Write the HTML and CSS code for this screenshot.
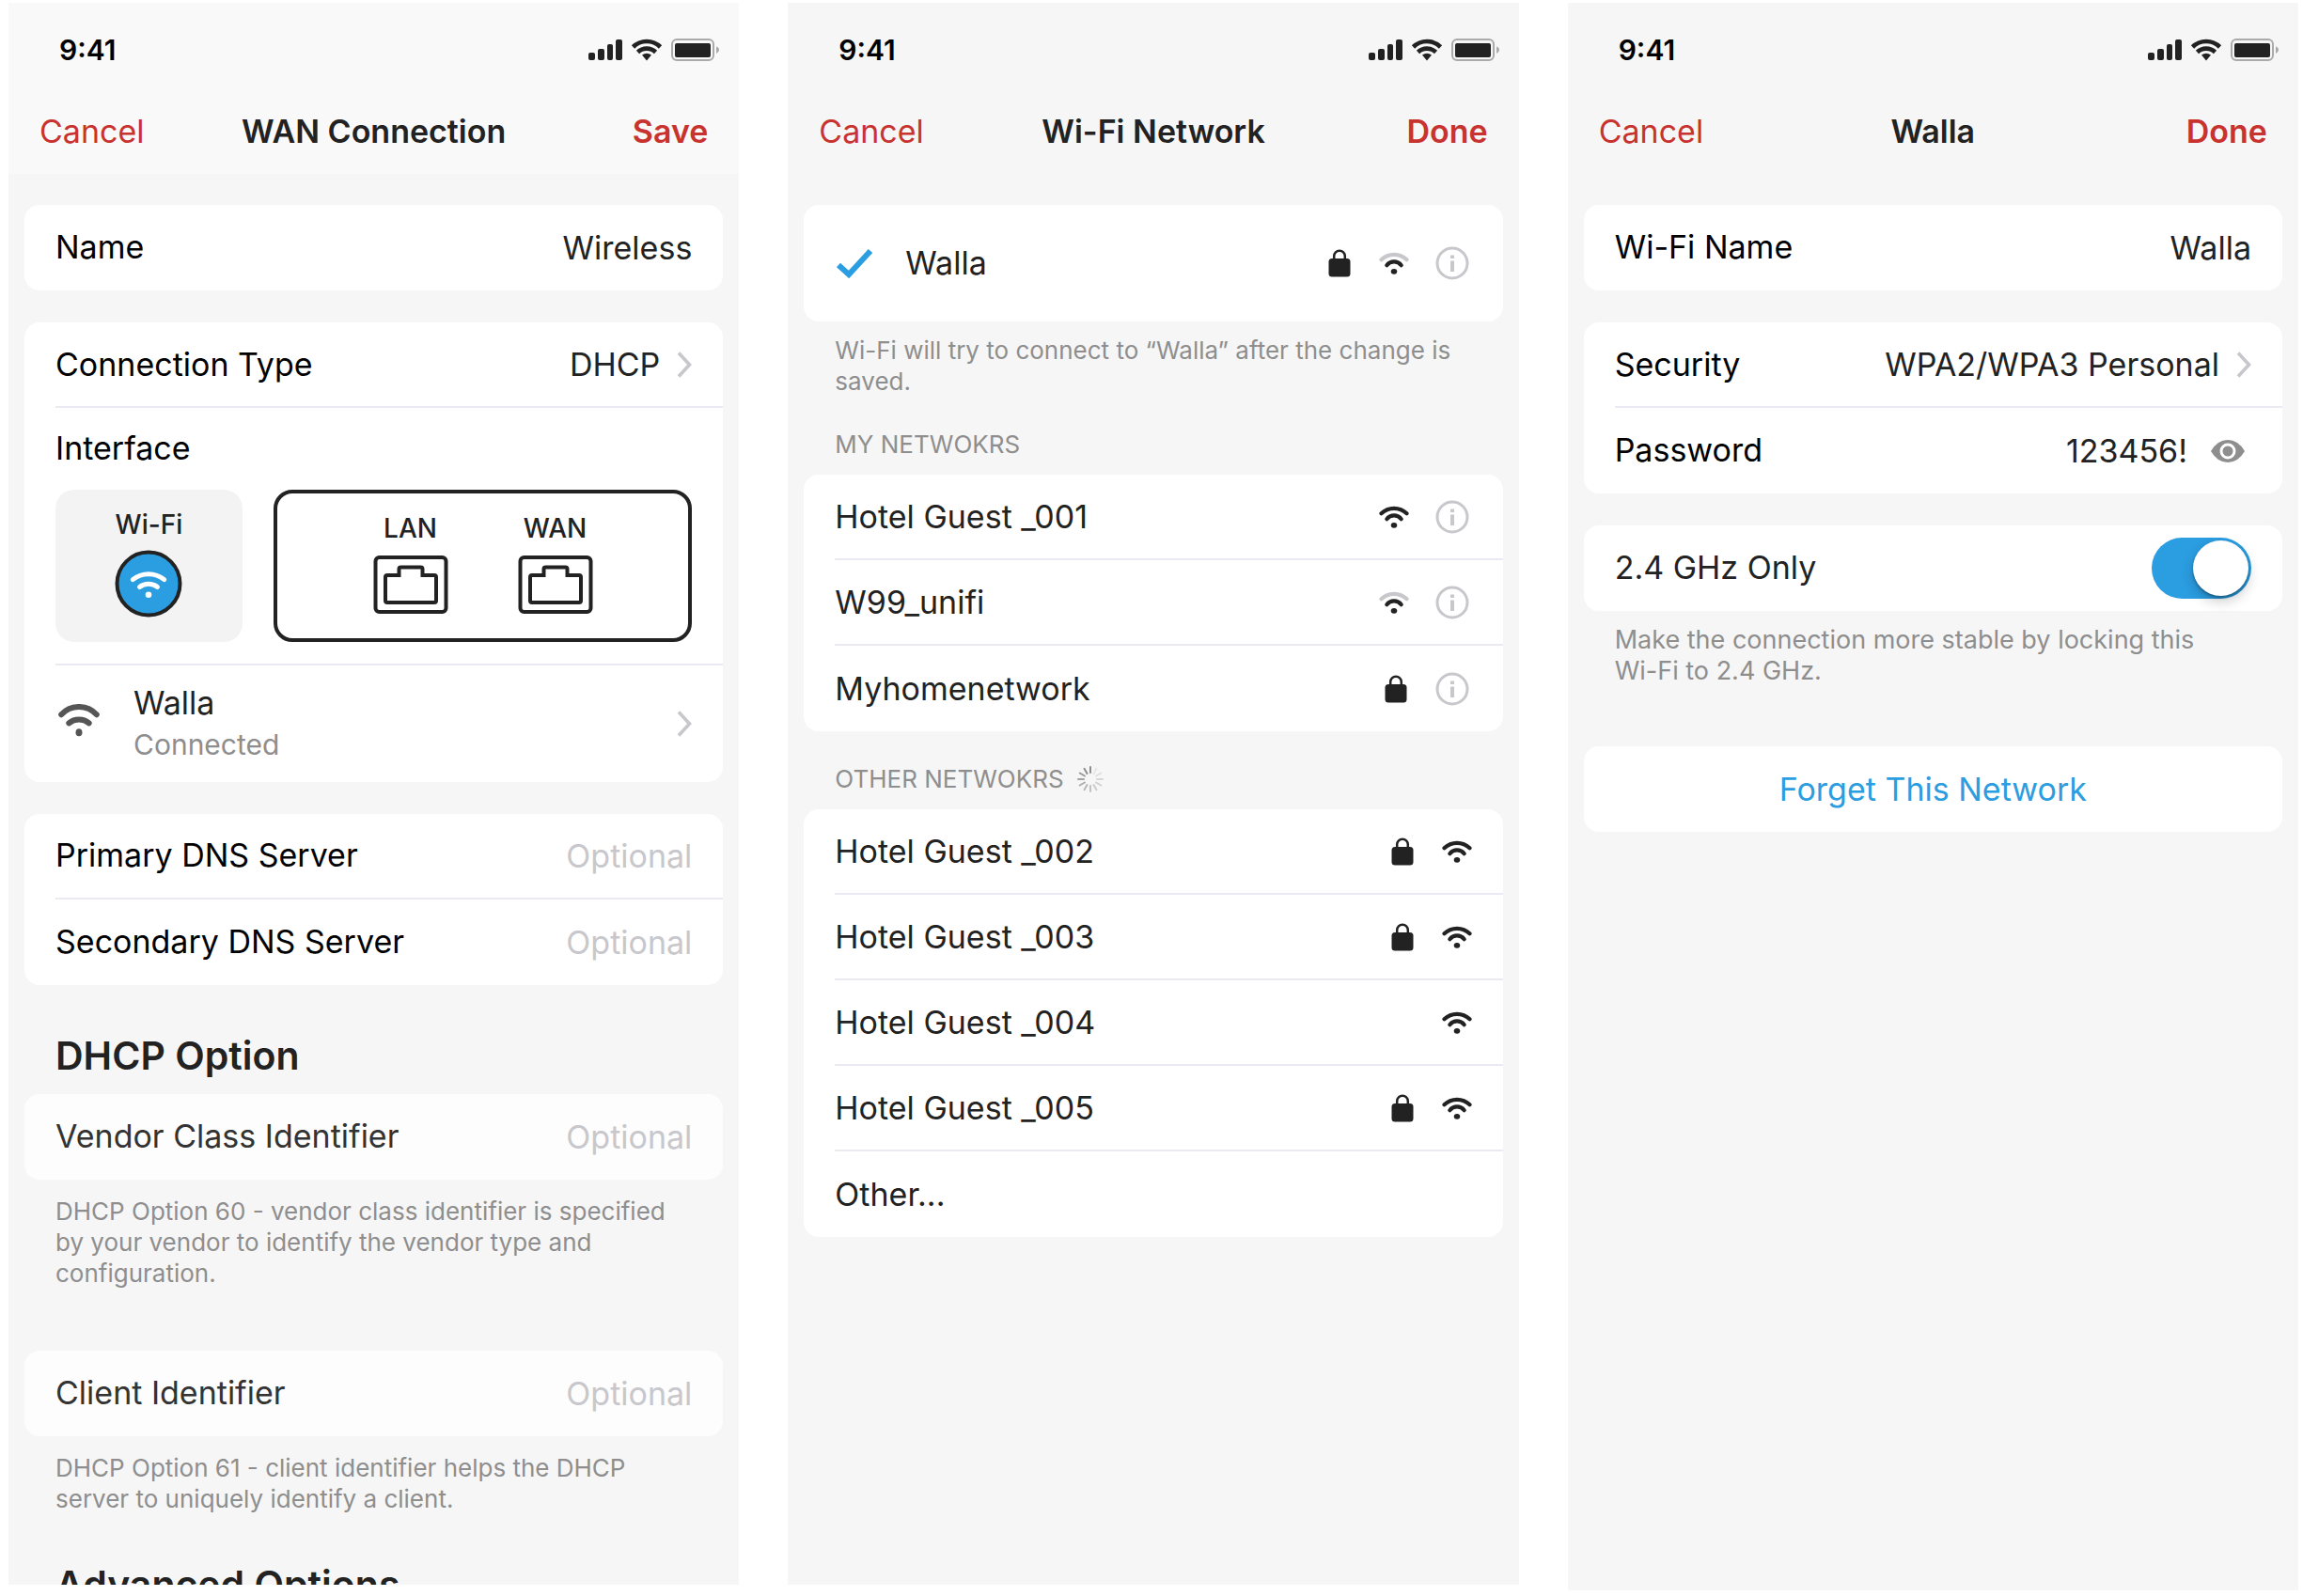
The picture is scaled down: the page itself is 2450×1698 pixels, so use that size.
FILE: index.html
```html
<!DOCTYPE html>
<html lang="en">
<head>
  <meta charset="UTF-8">
  <meta name="viewport" content="width=device-width, initial-scale=1">
  <title>WAN Connection</title>
  <link rel="stylesheet" href="styles.css">
</head>
<body>
  <!-- shared icons -->
  <svg class="sprite" aria-hidden="true">
    <symbol id="status" viewBox="0 0 140 24">
      <g fill="#222">
        <rect x="0" y="15" width="7" height="8" rx="2"/>
        <rect x="10" y="11" width="7" height="12" rx="2"/>
        <rect x="20" y="6" width="6" height="17" rx="2"/>
        <rect x="29" y="1" width="7" height="22" rx="2"/>
        <path d="M57 17.5Q62 14 67 17.5L62 23.5Z"/>
        <rect x="92" y="5" width="38" height="15" rx="2"/>
      </g>
      <g fill="none" stroke="#222" stroke-width="4.6">
        <path d="M47.5 9A20.5 20.5 0 0 1 76.5 9"/>
        <path d="M52.5 14.5A13.5 13.5 0 0 1 71.5 14.5"/>
      </g>
      <rect x="89" y="1" width="44" height="22" rx="5" fill="none" stroke="#aaa" stroke-width="2"/>
      <path d="M136 8.5Q139 9.5 139 12T136 16Z" fill="#aaa"/>
    </symbol>
    <symbol id="wifi" viewBox="0 0 32 24">
      <g fill="none" stroke="currentColor" stroke-width="4.2" stroke-linecap="round">
        <path d="M2.5 8.3A19.3 19.3 0 0 1 29.5 8.3"/>
        <path stroke="#222" d="M8.3 14.2A9.8 9.8 0 0 1 23.7 14.2"/>
      </g>
      <ellipse cx="16" cy="20.8" rx="3.3" ry="2.9" fill="#222"/>
    </symbol>
    <symbol id="lock" viewBox="0 0 28 30">
      <rect x="2.5" y="10" width="23" height="19.5" rx="3.5" fill="#222"/>
      <path d="M8.2 12V7.5A5.8 5.8 0 0 1 19.8 7.5V12" fill="none" stroke="#222" stroke-width="2.5"/>
    </symbol>
    <symbol id="info" viewBox="0 0 36 36">
      <circle cx="18" cy="18" r="16" fill="none" stroke="#c7c7cc" stroke-width="3"/>
      <path d="M16 9.5H20V13H16ZM16 15.5H20V27H16Z" fill="#c7c7cc"/>
    </symbol>
    <symbol id="chevron" viewBox="0 0 16 28">
      <path d="M2 1.5L13.5 14L2 26.5" fill="none" stroke="#c7c7cc" stroke-width="3.6"/>
    </symbol>
    <symbol id="port" viewBox="0 0 80 62">
      <g fill="none" stroke="#222" stroke-width="4">
        <rect x="2.5" y="2" width="75" height="58" rx="4"/>
        <path d="M13 23Q13 21 15 21H27.5V14.5Q27.5 12.5 29.5 12.5H50.5Q52.5 12.5 52.5 14.5V21H65Q67 21 67 23V48Q67 50 65 50H15Q13 50 13 48Z"/>
      </g>
    </symbol>
  </svg>

  <main class="stage">
    <section class="phone phone-wan">
      <header class="header">
        <div class="statusbar">
          <span>9:41</span>
          <svg class="icon-status"><use href="#status"/></svg>
        </div>
        <nav class="navbar">
          <button class="nav-btn">Cancel</button>
          <h1>WAN Connection</h1>
          <button class="nav-btn nav-btn-main">Save</button>
        </nav>
      </header>

      <div class="card">
        <div class="row">
          <label for="name">Name</label>
          <input id="name" type="text" value="Wireless">
        </div>
      </div>

      <div class="card">
        <button class="row">
          <span class="label">Connection Type</span>
          <span class="value">DHCP</span>
          <svg class="icon-chevron"><use href="#chevron"/></svg>
        </button>
        <div class="interface">
          <h3>Interface</h3>
          <div class="ports">
            <button class="port port-wifi">
              <span>Wi-Fi</span>
              <svg class="icon-wifi-round" viewBox="0 0 72 72">
                <circle cx="36" cy="36" r="33.5" fill="#2b9de1" stroke="#222" stroke-width="4"/>
                <g fill="none" stroke="#fff" stroke-width="5" stroke-linecap="round">
                  <path d="M19.3 31.7A26 26 0 0 1 52.7 31.7"/>
                  <path d="M26.5 39.5A15.5 15.5 0 0 1 45.5 39.5"/>
                </g>
                <circle cx="36" cy="47.7" r="3.3" fill="#fff"/>
              </svg>
            </button>
            <button class="port port-wired">
              <span class="jack">
                <span>LAN</span>
                <svg class="icon-port"><use href="#port"/></svg>
              </span>
              <span class="jack">
                <span>WAN</span>
                <svg class="icon-port"><use href="#port"/></svg>
              </span>
            </button>
          </div>
        </div>
        <button class="row row-tall">
          <svg class="icon-wifi-big" viewBox="0 0 44 36">
            <g fill="none" stroke="#555" stroke-width="6" stroke-linecap="round">
              <path d="M3.2 11.3A25.4 25.4 0 0 1 40.8 11.3"/>
              <path d="M11.3 20.3A17 17 0 0 1 32.7 20.3"/>
            </g>
            <ellipse cx="22" cy="30.3" rx="3.5" ry="4" fill="#555"/>
          </svg>
          <span class="label network">
            <span>Walla</span>
            <small>Connected</small>
          </span>
          <svg class="icon-chevron"><use href="#chevron"/></svg>
        </button>
      </div>

      <div class="card">
        <div class="row">
          <label for="dns1">Primary DNS Server</label>
          <input id="dns1" type="text" placeholder="Optional">
        </div>
        <div class="row">
          <label for="dns2">Secondary DNS Server</label>
          <input id="dns2" type="text" placeholder="Optional">
        </div>
      </div>

      <h2>DHCP Option</h2>
      <div class="card card-option">
        <div class="row">
          <label for="vendor">Vendor Class Identifier</label>
          <input id="vendor" type="text" placeholder="Optional">
        </div>
      </div>
      <p class="note">DHCP Option 60 - vendor class identifier is specified by your vendor to identify the vendor type and configuration.</p>

      <div class="card card-option card-spaced">
        <div class="row">
          <label for="client">Client Identifier</label>
          <input id="client" type="text" placeholder="Optional">
        </div>
      </div>
      <p class="note">DHCP Option 61 - client identifier helps the DHCP server to uniquely identify a client.</p>

      <h2>Advanced Options</h2>
    </section>

    <section class="phone phone-networks">
      <header class="header">
        <div class="statusbar">
          <span>9:41</span>
          <svg class="icon-status"><use href="#status"/></svg>
        </div>
        <nav class="navbar">
          <button class="nav-btn">Cancel</button>
          <h1>Wi-Fi Network</h1>
          <button class="nav-btn nav-btn-main">Done</button>
        </nav>
      </header>

      <div class="card">
        <div class="row row-tall">
          <svg class="icon-check" viewBox="0 0 40 32"><path d="M4 18L15 28L38 3" fill="none" stroke="#2b9de1" stroke-width="6"/></svg>
          <span class="label">Walla</span>
          <svg class="icon-lock"><use href="#lock"/></svg>
          <svg class="icon-wifi weak"><use href="#wifi"/></svg>
          <button class="info" aria-label="Walla details"><svg class="icon-info"><use href="#info"/></svg></button>
        </div>
      </div>
      <p class="note">Wi-Fi will try to connect to “Walla” after the change is saved.</p>

      <h3 class="group">MY NETWOKRS</h3>
      <div class="card">
        <div class="row">
          <span class="label">Hotel Guest _001</span>
          <svg class="icon-wifi"><use href="#wifi"/></svg>
          <button class="info" aria-label="Hotel Guest _001 details"><svg class="icon-info"><use href="#info"/></svg></button>
        </div>
        <div class="row">
          <span class="label">W99_unifi</span>
          <svg class="icon-wifi weak"><use href="#wifi"/></svg>
          <button class="info" aria-label="W99_unifi details"><svg class="icon-info"><use href="#info"/></svg></button>
        </div>
        <div class="row">
          <span class="label">Myhomenetwork</span>
          <svg class="icon-lock"><use href="#lock"/></svg>
          <button class="info" aria-label="Myhomenetwork details"><svg class="icon-info"><use href="#info"/></svg></button>
        </div>
      </div>

      <h3 class="group">OTHER NETWOKRS
        <svg class="icon-spinner" viewBox="-14 -14 28 28" stroke="#8e8e8e" stroke-width="2" stroke-linecap="round">
          <path d="M0-7V-13"/>
          <path d="M0-7V-13" transform="rotate(30)" opacity=".15"/>
          <path d="M0-7V-13" transform="rotate(60)" opacity=".2"/>
          <path d="M0-7V-13" transform="rotate(90)" opacity=".3"/>
          <path d="M0-7V-13" transform="rotate(120)" opacity=".35"/>
          <path d="M0-7V-13" transform="rotate(150)" opacity=".4"/>
          <path d="M0-7V-13" transform="rotate(180)" opacity=".5"/>
          <path d="M0-7V-13" transform="rotate(210)" opacity=".6"/>
          <path d="M0-7V-13" transform="rotate(240)" opacity=".7"/>
          <path d="M0-7V-13" transform="rotate(270)" opacity=".8"/>
          <path d="M0-7V-13" transform="rotate(300)" opacity=".9"/>
          <path d="M0-7V-13" transform="rotate(330)"/>
        </svg>
      </h3>
      <div class="card">
        <button class="row">
          <span class="label">Hotel Guest _002</span>
          <svg class="icon-lock"><use href="#lock"/></svg>
          <svg class="icon-wifi"><use href="#wifi"/></svg>
        </button>
        <button class="row">
          <span class="label">Hotel Guest _003</span>
          <svg class="icon-lock"><use href="#lock"/></svg>
          <svg class="icon-wifi"><use href="#wifi"/></svg>
        </button>
        <button class="row">
          <span class="label">Hotel Guest _004</span>
          <svg class="icon-wifi"><use href="#wifi"/></svg>
        </button>
        <button class="row">
          <span class="label">Hotel Guest _005</span>
          <svg class="icon-lock"><use href="#lock"/></svg>
          <svg class="icon-wifi"><use href="#wifi"/></svg>
        </button>
        <button class="row">
          <span class="label">Other...</span>
        </button>
      </div>
    </section>

    <section class="phone phone-detail">
      <header class="header">
        <div class="statusbar">
          <span>9:41</span>
          <svg class="icon-status"><use href="#status"/></svg>
        </div>
        <nav class="navbar">
          <button class="nav-btn">Cancel</button>
          <h1>Walla</h1>
          <button class="nav-btn nav-btn-main">Done</button>
        </nav>
      </header>

      <div class="card">
        <div class="row">
          <label for="ssid">Wi-Fi Name</label>
          <input id="ssid" type="text" value="Walla">
        </div>
      </div>

      <div class="card">
        <button class="row">
          <span class="label">Security</span>
          <span class="value">WPA2/WPA3 Personal</span>
          <svg class="icon-chevron"><use href="#chevron"/></svg>
        </button>
        <div class="row">
          <label for="password">Password</label>
          <input id="password" type="text" value="123456!">
          <button class="reveal" aria-label="Hide password">
            <svg class="icon-eye" viewBox="0 0 38 26">
              <path d="M1 13Q8 1 19 1T37 13Q30 25 19 25T1 13Z" fill="#8e8e8e"/>
              <circle cx="19" cy="13" r="7" fill="#8e8e8e" stroke="#fff" stroke-width="3"/>
            </svg>
          </button>
        </div>
      </div>

      <div class="card">
        <div class="row">
          <label for="band">2.4 GHz Only</label>
          <input id="band" class="toggle" type="checkbox" checked>
        </div>
      </div>
      <p class="note">Make the connection more stable by locking this <span class="nowrap">Wi-Fi</span> to 2.4 GHz.</p>

      <div class="card card-spaced">
        <button class="forget">Forget This Network</button>
      </div>
    </section>
  </main>
</body>
</html>
```

FILE: styles.css
```css
* {
  margin: 0;
  padding: 0;
  box-sizing: border-box;
}

body {
  background: #fff;
  color: #222;
  font-family: Inter, 'Liberation Sans', sans-serif;
  font-size: 34px;
  line-height: 44px;
}

button,
input {
  font: inherit;
  color: inherit;
  background: none;
  border: 0;
  outline: 0;
}

button {
  cursor: pointer;
}

svg {
  display: block;
  flex: none;
}

.sprite {
  position: absolute;
  width: 0;
  height: 0;
}

.nowrap {
  white-space: nowrap;
}

.stage {
  display: grid;
  grid-template-columns: repeat(3, 1fr);
  gap: 52px;
  height: 100vh;
  padding: 3px 5px 6px 9px;
}

.phone {
  min-width: 0;
  background: #f6f6f6;
  overflow: hidden;
}

.phone-wan,
.phone-networks {
  margin-bottom: 6px;
}

/* header */
.header {
  height: 182px;
}

.phone-wan .header {
  background: #f9f9f9;
}

.statusbar {
  display: flex;
  align-items: center;
  justify-content: space-between;
  height: 99px;
  padding: 0 20px 0 54px;
  color: #000;
  font-size: 30px;
  font-weight: 600;
}

.navbar {
  display: grid;
  grid-template-columns: 1fr auto 1fr;
  align-items: center;
  height: 76px;
  padding: 0 33px;
}

.navbar h1 {
  font-size: 34px;
  font-weight: 600;
}

.nav-btn {
  justify-self: start;
  color: #c8332f;
}

.nav-btn-main {
  justify-self: end;
  font-weight: 600;
}

/* cards and rows */
.card {
  margin: 34px 17px 0;
  background: #fff;
  border-radius: 16px;
}

.header + .card {
  margin-top: 33px;
}

.row {
  display: flex;
  align-items: center;
  width: calc(100% - 33px);
  min-height: 91px;
  margin-left: 33px;
  padding-right: 33px;
  border-bottom: 2px solid #eaebf2;
  text-align: left;
}

.row:last-child {
  border-bottom: 0;
}

.row-tall {
  min-height: 124px;
}

.row label,
.label {
  flex: 1;
  white-space: nowrap;
}

.row label {
  padding-bottom: 2px;
}

.phone-wan label,
.phone-wan .label,
.phone-detail label,
.phone-detail .label,
.interface h3 {
  color: #000;
}

.phone-detail label[for="band"] {
  color: #222;
}

.row input[type="text"] {
  width: 45%;
  text-align: right;
}

input::placeholder {
  color: #c7c7cc;
  opacity: 1;
}

.card-option {
  background: #fdfdfd;
}

.phone-wan .card-option label {
  color: #333;
}

.card-spaced {
  margin-top: 66px;
}

h2 + .card {
  margin-top: 16px;
}

h2 {
  margin: 50px 50px 0;
  font-size: 41px;
  font-weight: 600;
  line-height: 50px;
}

.note,
.group {
  margin: 14px 50px 0;
  color: #8e8e8e;
  font-size: 26px;
  font-weight: 400;
  line-height: 33px;
}

.phone-wan .note {
  margin-top: 17px;
}

.phone-detail .note {
  font-size: 27px;
}

.phone-detail .card-spaced {
  margin-top: 64px;
}

.group {
  display: flex;
  align-items: center;
  gap: 14px;
  margin-top: 34px;
}

.group + .card {
  margin-top: 16px;
}

/* interface picker */
.interface {
  margin-left: 33px;
  padding: 21px 33px 23px 0;
  border-bottom: 2px solid #eaebf2;
}

.interface h3 {
  margin-bottom: 22px;
  font-size: 34px;
  font-weight: 400;
}

.ports {
  display: grid;
  grid-template-columns: 199fr 446fr;
  gap: 33px;
}

.port {
  display: flex;
  height: 162px;
  padding-top: 20px;
  border-radius: 20px;
  font-size: 28px;
  font-weight: 500;
  line-height: 34px;
}

.port-wifi {
  flex-direction: column;
  align-items: center;
  gap: 10px;
  background: #f3f3f3;
}

.port-wired {
  justify-content: center;
  gap: 74px;
  border: 4px solid #222;
}

.jack {
  display: flex;
  flex-direction: column;
  align-items: center;
  gap: 12px;
}

.phone-wan .network {
  display: flex;
  flex-direction: column;
  margin-left: 36px;
  color: #222;
}

.network small {
  color: #8e8e8e;
  font-size: 30px;
}

/* icons */
.icon-status {
  width: 140px;
  height: 24px;
}

.icon-wifi {
  width: 32px;
  height: 24px;
  margin-left: 28px;
}

.weak {
  color: #c7c7cc;
}

.icon-lock {
  width: 28px;
  height: 30px;
}

.icon-info {
  width: 36px;
  height: 36px;
}

.info {
  margin: 0 3px 0 28px;
}

.icon-check {
  width: 40px;
  height: 32px;
  margin-right: 35px;
}

.icon-chevron {
  width: 16px;
  height: 28px;
  margin-left: 18px;
}

.icon-port {
  width: 80px;
  height: 62px;
}

.icon-wifi-round {
  width: 72px;
  height: 72px;
}

.icon-wifi-big {
  width: 44px;
  height: 36px;
  margin: 0 0 6px 3px;
}

.icon-spinner {
  width: 28px;
  height: 28px;
}

.icon-eye {
  width: 38px;
  height: 26px;
}

.reveal {
  margin: 0 6px 0 24px;
}

/* switch */
.toggle {
  width: 106px;
  height: 65px;
  padding: 3px;
  border-radius: 33px;
  background: #c7c7cc;
  appearance: none;
  cursor: pointer;
}

.toggle::before {
  content: '';
  display: block;
  width: 59px;
  height: 59px;
  border-radius: 50%;
  background: #fff;
  box-shadow: 0 2px 3px rgba(0, 0, 0, 0.3), 0 6px 14px rgba(0, 0, 0, 0.2);
}

.toggle:checked {
  background: #2b9de1;
}

.toggle:checked::before {
  margin-left: auto;
}

.forget {
  width: 100%;
  min-height: 91px;
  color: #2b9de1;
}
```
